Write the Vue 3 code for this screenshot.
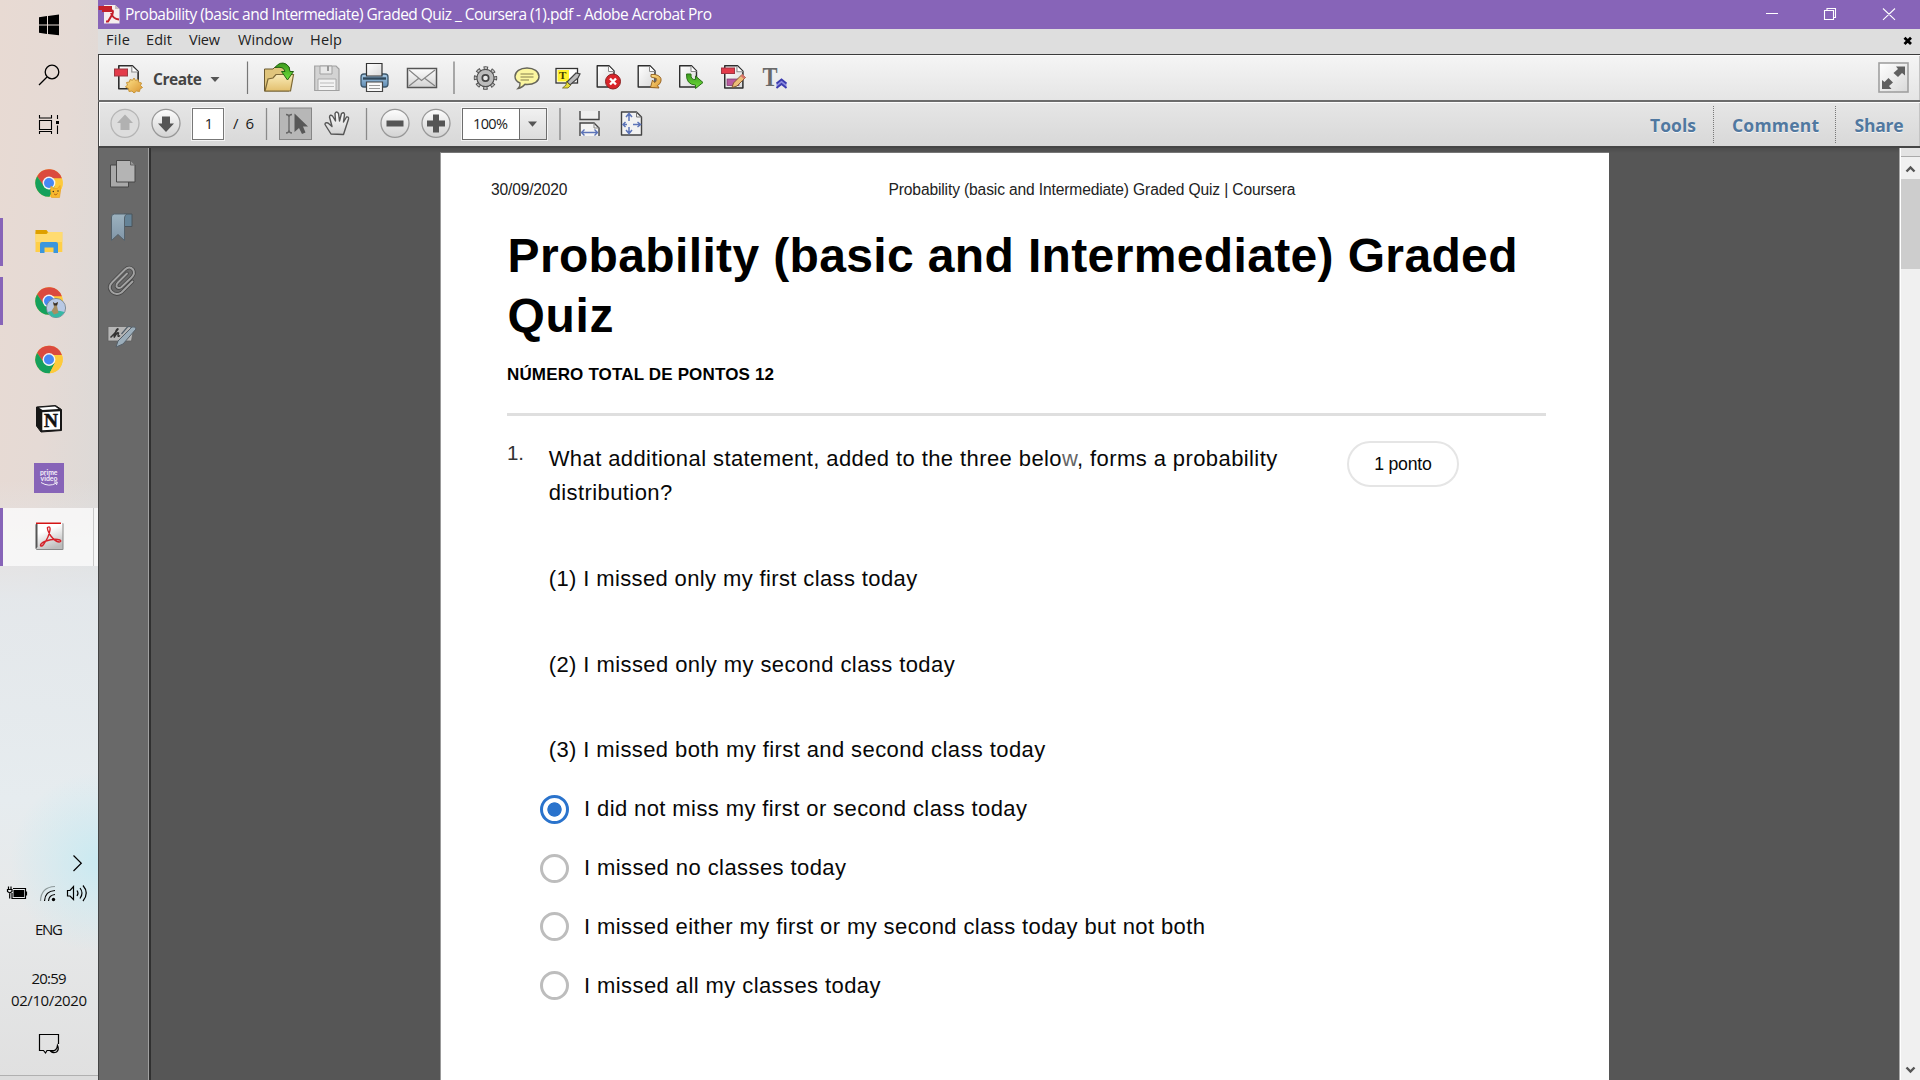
<script setup>
// Text runs carry their own advance width; tracking is adjusted so each run fills it.
const vFit = {
  mounted(el, { value }) {
    const gaps = el.textContent.length - 1
    const natural = el.getBoundingClientRect().width
    el.style.letterSpacing = `${(value - natural) / gaps}px`
    el.style.marginRight = `${-(value - natural) / gaps}px`
  },
}

const menus = [
  { label: 'File', width: 24, cell: 40 },
  { label: 'Edit', width: 26, cell: 43 },
  { label: 'View', width: 31, cell: 49 },
  { label: 'Window', width: 55, cell: 72 },
  { label: 'Help', width: 32, cell: 60 },
]

const options = [
  { text: 'I did not miss my first or second class today', width: 443, checked: true },
  { text: 'I missed no classes today', width: 262, checked: false },
  { text: 'I missed either my first or my second class today but not both', width: 621, checked: false },
  { text: 'I missed all my classes today', width: 296.5, checked: false },
]
</script>

<template>
  <div class="screen">
    <svg class="defs" width="0" height="0">
      <defs>
        <linearGradient id="gPaper" x1="0" y1="0" x2="1" y2="1"><stop offset="0" stop-color="#fff" /><stop offset="1" stop-color="#d9d9d9" /></linearGradient>
        <linearGradient id="gRound" x1="0" y1="0" x2="0" y2="1"><stop offset="0" stop-color="#fdfdfd" /><stop offset="1" stop-color="#d2d2d2" /></linearGradient>
        <linearGradient id="gTile" x1="0.2" y1="0" x2="0.6" y2="1"><stop offset="0.3" stop-color="#fff" /><stop offset="1" stop-color="#bcbcbc" /></linearGradient>
        <linearGradient id="gFolder" x1="0" y1="0" x2="0" y2="1"><stop offset="0" stop-color="#f9ebb8" /><stop offset="1" stop-color="#e3c06e" /></linearGradient>
        <linearGradient id="gGreen" x1="0" y1="0" x2="0" y2="1"><stop offset="0" stop-color="#3c9a1e" /><stop offset="1" stop-color="#6fe03a" /></linearGradient>
        <linearGradient id="gBlue" x1="0" y1="0" x2="0" y2="1"><stop offset="0" stop-color="#a9cbe6" /><stop offset="1" stop-color="#5f8cb4" /></linearGradient>
        <linearGradient id="gGold" x1="0" y1="0" x2="1" y2="1"><stop offset="0" stop-color="#ffe58c" /><stop offset="1" stop-color="#d9932f" /></linearGradient>
        <linearGradient id="gMark" x1="0" y1="0" x2="0" y2="1"><stop offset="0" stop-color="#9cb2bf" /><stop offset="1" stop-color="#8196a8" /></linearGradient>
        <g id="chrome">
          <circle r="13.7" fill="#fc3" />
          <path d="M-11.9-6.8A13.7 13.7 0 0 1 12.9-4.6H0L-5.5 3.2Z" fill="#db4a3f" />
          <path d="M-11.9-6.8A13.7 13.7 0 0 0 .6 13.7L6 3.2 0 6.4-5.2 3Z" fill="#15a05c" />
          <path d="M0-4.6H12.9A13.7 13.7 0 0 1 .6 13.7L6 3.2Z" fill="#fdca3c" />
          <circle r="6.4" fill="#f4f4f4" /><circle r="5" fill="#4688f4" />
        </g>
        <g id="sheet">
          <path d="M.7.7H12.5L17.5 6V22H.7Z" fill="url(#gPaper)" stroke="#2e2e2e" stroke-width="1.4" stroke-linejoin="round" />
          <path d="M12 1V6.5H17.5" fill="#fff" stroke="#8a8a8a" stroke-width="1" />
        </g>
      </defs>
    </svg>

    <aside class="taskbar">
      <svg width="98" height="50" viewBox="0 0 98 50"><path d="M39 17.2 47 16v8.5H39ZM48 15.9 59 14.6V24.5H48ZM39 25.5H47V34L39 32.8ZM48 25.5H59V35.2L48 34Z" fill="#000" /></svg>
      <svg width="98" height="50" viewBox="0 50 98 50" fill="none" stroke="#000" stroke-width="1.3"><circle cx="52" cy="72" r="6.8" /><path d="M47 77 39 85" /></svg>
      <svg width="98" height="50" viewBox="0 100 98 50" fill="none" stroke="#000" stroke-width="1.1"><path d="M39.5 120.5H51.5V129.5H39.5ZM39.5 115V118H51.5V115M39.5 134V131.500H51.5V134M57.500 115V119M57.500 125.500V134" /><rect x="56" y="121" width="3" height="3" fill="#000" stroke="none" /></svg>
      <svg width="98" height="65" viewBox="0 150 98 65">
        <use href="#chrome" transform="translate(49 183)" />
        <path d="M50.500 190 51 186 54 188.500H57.500L60 185.500 60.500 191 59.500 197.500H51.500Z" fill="#f7b92f" stroke="#e89c1d" stroke-width=".6" /><circle cx="53.300" cy="191.500" r=".7" fill="#222" /><circle cx="58" cy="191" r=".7" fill="#222" /><path d="M54 194Q56 196 57.500 193.500" fill="none" stroke="#a44d12" stroke-width=".8" />
      </svg>
      <div class="task">
        <svg width="98" height="55" viewBox="0 215 98 55">
          <rect x="0" y="218" width="3" height="48" fill="#8764b8" />
          <path d="M35.500 232H62.300V252H35.500Z" fill="#ffcf48" /><path d="M35.500 230H46.500L48 232 46.500 234H35.500Z" fill="#dea000" /><path d="M35.500 234H47L49 232H62.300V242H35.500Z" fill="#ffdb70" />
          <path d="M40 253V244Q40 242 42 242H56Q58 242 58 244V253H53.500V247.500H44.500V253Z" fill="#3a96dd" />
        </svg>
      </div>
      <svg width="98" height="65" viewBox="0 270 98 65">
        <rect x="0" y="277" width="3" height="48" fill="#8764b8" />
        <use href="#chrome" transform="translate(49 301)" />
        <circle cx="56" cy="308" r="9.600" fill="#b9c9e4" stroke="#6e7e88" stroke-width=".8" /><path d="M47.500 312Q56 309 64.500 312Q61 317.500 56 317.500T47.500 312Z" fill="#37b8a4" /><path d="M53 302 55 304 58 302 57 306 58.500 313 54 314.500 51.500 311 54 307Z" fill="#a78f62" /><path d="M53 302 55 303.500 58 302 57 305.500H54Z" fill="#37302a" />
      </svg>
      <svg width="98" height="50" viewBox="0 335 98 50"><use href="#chrome" transform="translate(49 359.500)" /></svg>
      <svg width="98" height="65" viewBox="0 385 98 65">
        <path d="M36.500 407 55.500 405.500 61.500 409.500V430.500L41 432 36.500 426Z" fill="#161616" stroke="#161616" stroke-linejoin="round" />
        <path d="M39 407.800 55 406.600 58.500 409 42.500 410Z" fill="#fff" /><path d="M42.300 412.300 60 411.200V429.300L42.300 430.200Z" fill="#fff" />
        <text x="44" y="427" font-family="Liberation Serif, serif" font-weight="700" font-size="18.500" textLength="14" lengthAdjust="spacingAndGlyphs" fill="#111" stroke="#111" stroke-width=".5">N</text>
      </svg>
      <svg width="98" height="58" viewBox="0 450 98 58">
        <rect x="34" y="463" width="30" height="30" fill="#8764b8" />
        <g font-family="Lato, sans-serif" font-weight="700" font-size="7" fill="#f4effa"><text x="40" y="474.500" textLength="17.500" lengthAdjust="spacingAndGlyphs">prime</text><text x="40.500" y="480.800" textLength="17" lengthAdjust="spacingAndGlyphs">video</text></g>
        <path d="M41 482.500Q49 487.500 56.500 483M54 482H57.300L56.500 485" fill="none" stroke="#f4effa" stroke-width="1" />
      </svg>
      <div class="task current">
        <svg width="98" height="58" viewBox="0 508 98 58">
          <rect x="0" y="508" width="3" height="58" fill="#8764b8" /><rect x="93" y="508" width="1" height="58" fill="#c9c9c9" />
          <rect x="36" y="523" width="27.500" height="27" rx="1" fill="#888" /><rect x="36.500" y="523" width="26" height="26" fill="url(#gTile)" /><path d="M35.500 524.500 37.500 523V547L35.500 549Z" fill="#555" /><path d="M36 522.500H61V524H36Z" fill="#d41414" />
          <path d="M47.500 527.500Q50.500 525.500 50 530 49 537 43.500 544.500 41.500 547 40.500 545.500 40 543.500 46 541 54 538 60 540 62 541.500 59 542 55 541.500 50.500 535.500 47 530 47.500 527.500Z" fill="none" stroke="#d5222a" stroke-width="1.400" />
        </svg>
      </div>
      <div class="grow"></div>
      <svg width="98" height="80" viewBox="0 840 98 80" fill="none" stroke="#000" stroke-width="1.200">
        <path d="M73.500 855.500 81.300 863.200 73.500 871" />
        <path d="M13 888.500H25.500V898.500H12V893M26.500 891.500V895.500" /><rect x="13.500" y="890" width="10.700" height="7" fill="#000" stroke="none" /><path d="M8.500 886.500V889M11 886.500V889M7.500 889.500H12V891.500L9.800 893 7.500 891.500ZM9.700 893V898.500" />
        <path d="M40.500 901Q41 887 55 886.500" stroke="#8c9899" /><path d="M44.500 901Q45 891 55 890.500M48.500 901Q49 895 55 894.500" /><circle cx="53.500" cy="899.500" r="1.700" fill="#000" stroke="none" />
        <path d="M67.500 890.500H70L73.500 886.500V899.500L70 896H67.500ZM77 890.500Q79 893 77 896M80 888Q84 893 80 898.500M83 885.500Q89.500 893 83 901" />
      </svg>
      <div class="tray lang"><span v-fit="28">ENG</span></div>
      <div class="tray time"><span v-fit="35">20:59</span></div>
      <div class="tray date"><span v-fit="76">02/10/2020</span></div>
      <svg width="98" height="59" viewBox="0 1016 98 59" fill="none" stroke="#000" stroke-width="1.200"><path d="M54 1050.500H47L45.500 1053 43.500 1050.500H39.500V1034.500H58.500V1044" /><path d="M57.500 1045.500Q59.500 1049.500 56.500 1052 53 1053.500 51 1051.500 57 1051 57.500 1045.500Z" stroke-width="1.300" /></svg>
      <div class="edge"></div>
    </aside>

    <main class="window">
      <header class="titlebar">
        <svg width="27" height="29" viewBox="98 0 27 29"><path d="M104 5H115L119.500 9V23.500H104Z" fill="#f5eeee" /><path d="M115 5V9H119.500Z" fill="#c9bcbc" /><path d="M98.500 6H112V12H102V10H98.500Z" fill="#c4202b" /><path d="M110.500 11Q114 9 112.500 14L108 21.500H106M111 13Q113 19 119 19.500" fill="none" stroke="#c4202b" stroke-width="2" /></svg>
        <span v-fit="587" class="title">Probability (basic and Intermediate) Graded Quiz _ Coursera (1).pdf - Adobe Acrobat Pro</span>
        <svg class="controls" width="180" height="29" viewBox="1740 0 180 29" fill="none" stroke="#fff" stroke-width="1.100"><path d="M1766 13.500H1778M1824.500 10.500H1833.500V19.500H1824.500ZM1827 10.500V8.500H1835.500V17.500H1833.500M1883 8.500 1895 19.800M1895 8.500 1883 19.800" /></svg>
      </header>

      <nav class="menubar">
        <div v-for="m in menus" :key="m.label" class="menu" :style="{ width: m.cell + 'px' }"><span v-fit="m.width">{{ m.label }}</span></div>
        <svg class="closedoc" width="20" height="25" viewBox="1900 29 20 25"><path d="M1904.500 37.800 1911 44M1911 37.800 1904.500 44" stroke="#000" stroke-width="2.800" /></svg>
      </nav>

      <section class="bar primary">
        <svg width="55" height="45" viewBox="98 55 55 45"><use href="#sheet" transform="translate(118 65) scale(1.150 1.080)" /><rect x="114.500" y="69" width="13" height="7" fill="#e33b4a" stroke="#9c3a42" /><path d="M134 78 135.500 80.500 138 79.500 138.500 82 141.500 83 140.500 85.500 142.500 87.500 140 89 139.500 91.500 136.500 91 134 93 132 91 129 91.500 128.500 88.500 125.500 87 127.500 85 126.500 82.500 129.500 82 130 79.500 132.500 80.300Z" fill="url(#gGold)" stroke="#c8963c" /></svg>
        <div class="create"><span v-fit="49">Create</span></div>
        <svg width="35" height="45" viewBox="205 55 35 45"><path d="M210.500 77H219.500L215 82Z" fill="#555" /></svg>
        <svg width="16" height="45" viewBox="240 55 16 45"><path d="M247.500 61.500V94" stroke="#777" stroke-width="1.200" /></svg>
        <svg width="46" height="45" viewBox="256 55 46 45"><path d="M264.500 91V69H273L275 67H289V91Z" fill="#e0c57c" stroke="#6b5a31" /><path d="M265 91 268 79 273 78 276 74.500H293.500L290.500 91Z" fill="url(#gFolder)" stroke="#7d6936" stroke-width="1.200" /><path d="M275 67.500Q280 61 286 64 290 66 290 71.500H293.500L287.500 80 281.500 71.500H285Q284 66 275 67.500Z" fill="url(#gGreen)" stroke="#236213" /></svg>
        <svg width="48" height="45" viewBox="302 55 48 45"><path d="M314.700 66H336L339 69V90.500H314.700Z" fill="#d3d3d3" stroke="#a1a1a1" stroke-width="1.200" /><path d="M320 66H332V74H320Z" fill="#e8e8e8" stroke="#a1a1a1" /><path d="M328 66V71" stroke="#999" stroke-width="2" /><path d="M318 90V79H336V90" fill="#f2f2f2" stroke="#a8a8a8" /><path d="M320 83H334M320 86.500H334" stroke="#bbb" /></svg>
        <svg width="47" height="45" viewBox="350 55 47 45"><rect x="361" y="74" width="27" height="13" rx="3" fill="url(#gBlue)" stroke="#3e586c" stroke-width="1.300" /><path d="M366.500 76V63.500H382V76Z" fill="url(#gPaper)" stroke="#333" stroke-width="1.200" /><path d="M363 78.500H386" stroke="#30485b" stroke-width="2.400" /><path d="M366.500 82H382.500V91.500H366.500Z" fill="#f8f8f8" stroke="#444" stroke-width="1.200" /><path d="M369 85.500H380M369 88.500H380" stroke="#999" /></svg>
        <svg width="48" height="45" viewBox="397 55 48 45"><rect x="407.500" y="68.500" width="29" height="19" fill="url(#gRound)" stroke="#555" stroke-width="1.500" /><path d="M409 70 421.500 80.500 435 70M409 86 418.500 78.500M435 86 425 78.500" fill="none" stroke="#858585" stroke-width="1.200" /></svg>
        <svg width="20" height="45" viewBox="445 55 20 45"><path d="M454 61.500V94" stroke="#777" stroke-width="1.200" /></svg>
        <svg width="40" height="45" viewBox="465 55 40 45"><circle cx="485.500" cy="78" r="10" fill="none" stroke="#4d4d4d" stroke-width="3.400" stroke-dasharray="4.400 3.454" stroke-dashoffset="2.200" /><circle cx="485.500" cy="78" r="8.600" fill="#bcbcbc" stroke="#505050" stroke-width="1.200" /><circle cx="485.500" cy="78" r="10" fill="none" stroke="#bcbcbc" stroke-width="1.800" stroke-dasharray="2.600 5.254" stroke-dashoffset="1.300" /><circle cx="485.500" cy="78" r="3.200" fill="#e8e8e8" stroke="#444" stroke-width="1.700" /></svg>
        <svg width="43" height="45" viewBox="505 55 43 45"><path d="M527 68C534 68 539 71.500 539 76.500S534 84.500 527 84.500L525 84.300Q522 88 518 88.500 520.500 86 520 83 515 81 515 76.500C515 71.500 520 68 527 68Z" fill="#fbf6a0" stroke="#66655a" stroke-width="1.400" /><path d="M520.500 74H533.500M520.500 77H533.500M520.500 80H529" stroke="#857f4e" stroke-width="1.200" /></svg>
        <svg width="40" height="45" viewBox="548 55 40 45"><rect x="556" y="68.500" width="21.500" height="14.500" fill="#fff" stroke="#333" stroke-width="1.300" /><rect x="557.500" y="70" width="11.500" height="11.500" fill="#fff22d" /><text x="559" y="79" font-family="Liberation Serif, serif" font-weight="700" font-size="11" fill="#433c00">T</text><path d="M567 82 576 73 580 74 578 78 570 85Z" fill="#bbb" stroke="#444" stroke-width="1.200" /><path d="M566.500 81.500 570.500 85.500 568 88H562.500L566 85Z" fill="#e6db34" stroke="#68601e" stroke-width=".8" /></svg>
        <svg width="42" height="45" viewBox="588 55 42 45"><use href="#sheet" transform="translate(596.500 65)" /><circle cx="613" cy="81.500" r="7.500" fill="#d9242a" stroke="#8c2222" /><path d="M610 78.500 616 84.500M616 78.500 610 84.500" stroke="#fff" stroke-width="2.400" /></svg>
        <svg width="40" height="45" viewBox="630 55 40 45"><use href="#sheet" transform="translate(637.500 65)" /><path d="M651 74.500H655Q662 76 661 81 660.500 84 657.500 85.500L659 88 650.500 87.500 652.500 80 654.500 82.500Q658 81 656.500 78.500L651 77Z" fill="url(#gGold)" stroke="#925e1d" stroke-width=".9" /></svg>
        <svg width="42" height="45" viewBox="670 55 42 45"><use href="#sheet" transform="translate(679 65)" /><path d="M686.500 74H691Q690.500 80 695.500 79.500V76L703 82.500 695.500 88.500V85Q686 84.500 686.500 74Z" fill="url(#gGreen)" stroke="#2b7018" /></svg>
        <svg width="43" height="45" viewBox="712 55 43 45"><use href="#sheet" transform="translate(724 65) scale(1.080 1.050)" /><rect x="721.500" y="68" width="13" height="5.500" fill="#e33b4a" stroke="#a13542" /><rect x="727" y="79" width="12" height="6.500" fill="#b95aa0" stroke="#773769" stroke-width=".7" /><path d="M732 87.500 733.500 83 742 74.500 745.500 77.500 737 86Z" fill="#edbd78" stroke="#805128" stroke-width=".9" /><path d="M740.500 76 742.500 74 745.500 77.500 744 79Z" fill="#d8736c" /></svg>
        <svg width="45" height="45" viewBox="755 55 45 45"><text x="762.500" y="86" font-family="Liberation Serif, serif" font-weight="700" font-size="27" textLength="15" lengthAdjust="spacingAndGlyphs" fill="#696969">T</text><path d="M776.500 83.500 781.500 79.500 786.500 83.500V88L781.500 84 776.500 88Z" fill="#8d8de0" /><path d="M776.500 83.500 781.500 79.500 786.500 83.500M776.500 88 781.500 84 786.500 88" fill="none" stroke="#3b3baf" stroke-width="1.800" /></svg>
        <i></i>
        <svg width="50" height="45" viewBox="1870 55 50 45"><rect x="1879" y="63" width="29" height="29" fill="url(#gPaper)" stroke="#a0a0a0" stroke-width="1.600" /><path d="M1896 66.500H1905V75.500L1902 73 1898 77 1893.500 73 1898 69ZM1882 80 1884.500 82 1888.500 78 1893 82.500 1889 86 1891.500 89H1882Z" fill="#606060" /></svg>
      </section>

      <section class="bar secondary">
        <svg width="47" height="44" viewBox="98 102 47 44"><circle cx="125" cy="123.300" r="14" fill="#ddd" stroke="#b5b5b5" stroke-width="1.300" /><path d="M125 114.500 133 123H129.500V130H120.500V123H117Z" fill="#b1b1b1" /></svg>
        <svg width="40" height="44" viewBox="145 102 40 44"><circle cx="166" cy="123.300" r="14" fill="url(#gRound)" stroke="#989898" stroke-width="1.300" /><path d="M166 132 158 123.500H162V116.500H170V123.500H174Z" fill="#555" /></svg>
        <div class="pagebox">1</div>
        <div class="pages"><span v-fit="21">/&nbsp; 6</span></div>
        <svg width="12" height="44" viewBox="260 102 12 44"><path d="M266.500 108V140" stroke="#8a8a8a" stroke-width="1.300" /></svg>
        <svg width="46" height="44" viewBox="272 102 46 44"><rect x="279.500" y="108" width="32" height="31.500" fill="#b7b7b7" stroke="#868686" /><path d="M286 114.500Q289 114.500 289 117V130Q289 133 286 133M292 114.500Q289 114.500 289 117M289 130Q289 133 292 133" fill="none" stroke="#666" stroke-width="1.300" /><path d="M294.500 113.500V132L299 128 302 134 305.500 132.500 303 126.500H308Z" fill="#585858" /></svg>
        <svg width="38" height="44" viewBox="318 102 38 44"><path d="M331 134 325 124.500Q325 122 328 123L332 126.500 329.500 117Q330 114 332.500 116L335.500 121 335 113.500Q336.500 110.500 338.500 113.500L339.500 121 341.500 113.500Q344 111.500 344.500 114.500L343.500 122 346.500 117Q349 116.500 348.500 119L343.500 134.500Z" fill="url(#gRound)" stroke="#555" stroke-width="1.400" stroke-linejoin="round" /></svg>
        <svg width="19" height="44" viewBox="356 102 19 44"><path d="M366.500 108V140" stroke="#8a8a8a" stroke-width="1.300" /></svg>
        <svg width="40" height="44" viewBox="375 102 40 44"><circle cx="395" cy="123.300" r="14" fill="url(#gRound)" stroke="#989898" stroke-width="1.300" /><rect x="386.500" y="120.500" width="17" height="6" fill="#555" /></svg>
        <svg width="40" height="44" viewBox="415 102 40 44"><circle cx="436" cy="123.300" r="14" fill="url(#gRound)" stroke="#989898" stroke-width="1.300" /><path d="M433 114.500H439V120.500H445V126.500H439V132.500H433V126.500H427V120.500H433Z" fill="#555" /></svg>
        <div class="zoombox"><div class="pct"><span v-fit="35">100%</span></div><div class="drop"><svg width="27" height="30" viewBox="520 109 27 30"><path d="M528 121.500H537L532.500 126.700Z" fill="#555" /></svg></div></div>
        <svg width="22" height="44" viewBox="550 102 22 44"><path d="M560 108V140" stroke="#8f8f8f" stroke-width="1.500" /></svg>
        <svg width="38" height="44" viewBox="572 102 38 44"><path d="M580 111V119.500H599V111" fill="#eee" stroke="#444" stroke-width="1.400" /><path d="M580 136V123H594L599 128V136" fill="#f4f4f4" stroke="#444" stroke-width="1.400" /><path d="M594 123V128H599" fill="none" stroke="#888" /><path d="M582 132.500H597M584.500 129.500 581.500 132.500 584.500 135.500M594.500 129.500 597.500 132.500 594.500 135.500" fill="none" stroke="#5c74b8" stroke-width="1.400" /></svg>
        <svg width="40" height="44" viewBox="610 102 40 44"><path d="M621.500 112H636.500L641.500 117V135H621.500Z" fill="#f2f2f2" stroke="#444" stroke-width="1.400" stroke-linejoin="round" /><path d="M636.500 112V117H641.500" fill="none" stroke="#777" /><path d="M629 114V121M629 127V133M622.500 124.500H627M633 124.500H640M626 117 629 113.500 632 117M626 130 629 133.500 632 130M625.500 122 623 124.500 625.500 127M637.500 122 640.500 124.500 637.500 127" fill="none" stroke="#5c74b8" stroke-width="1.500" /></svg>
        <i></i>
        <div class="panel tools"><span v-fit="46">Tools</span></div>
        <div class="panel comment"><span v-fit="87">Comment</span></div>
        <div class="panel share"><span v-fit="49">Share</span></div>
      </section>

      <div class="body">
        <aside class="side">
          <svg width="51" height="220" viewBox="98 148 51 220">
            <path d="M110.500 165H128.500V187H110.500Z" fill="#a9a9a9" stroke="#474747" /><path d="M116.500 160.500H130.500L135 165V182H116.500Z" fill="#b4b4b4" stroke="#474747" /><path d="M130.500 160.500V165H135" fill="#999" stroke="#666" />
            <path d="M124 214H132V226.500H124Z" fill="#658397" stroke="#4b545b" /><path d="M111.500 240.500V217Q111.500 214 114.500 214H127Q124.500 215 124.500 218V240.500L118 234.500Z" fill="url(#gMark)" stroke="#54626c" stroke-width="1" />
            <g fill="none" stroke-linecap="round" stroke-linejoin="round"><path d="M132.500 281.500 121.500 292.500Q116 296 111.500 291.500 107.500 287 112.500 282L125 269.500Q129.500 265.500 133 269.500 135.500 273.500 131.500 277.500L121 287.500Q118 289 116.500 286.500 116 284.500 118 282.500L127 273.500" stroke="#484848" stroke-width="3.600" /><path d="M132.500 281.500 121.500 292.500Q116 296 111.500 291.500 107.500 287 112.500 282L125 269.500Q129.500 265.500 133 269.500 135.500 273.500 131.500 277.500L121 287.500Q118 289 116.500 286.500 116 284.500 118 282.500L127 273.500" stroke="#a2a2a2" stroke-width="1.900" /></g>
            <path d="M108 326.500H134L131.500 341H108Z" fill="#b6b6b6" stroke="#606060" stroke-width=".8" /><path d="M110.500 337.500Q115.500 333 118 329 116.500 327.500 114 337.500 117.500 331.500 118.500 333 117 338 120 335.500" fill="none" stroke="#333" stroke-width="1.500" /><path d="M116 347 118 341 132 327Q136 326 136 329L123 344Z" fill="#9caebb" stroke="#566069" stroke-width="1" /><path d="M121.500 334 127 327.500Q129.500 325.500 131 327.500" fill="none" stroke="#53606a" stroke-width="1.200" />
          </svg>
        </aside>
        <div class="canvas">
          <article class="page">
            <div class="running"><span v-fit="76.5">30/09/2020</span><span v-fit="407" class="runtitle">Probability (basic and Intermediate) Graded Quiz | Coursera</span></div>
            <h1><div><span v-fit="1010">Probability (basic and Intermediate) Graded</span></div><div><span v-fit="106">Quiz</span></div></h1>
            <h2><span v-fit="267">NÚMERO TOTAL DE PONTOS 12</span></h2>
            <hr />
            <div class="question">
              <div class="num"><span v-fit="17">1.</span></div>
              <div class="prompt">
                <p><span v-fit="728.5">What additional statement, added to the three belo<em>w</em>, forms a probability</span></p>
                <p><span v-fit="123.5">distribution?</span></p>
                <p class="given"><span v-fit="368.5">(1) I missed only my first class today</span></p>
                <p class="given second"><span v-fit="406">(2) I missed only my second class today</span></p>
                <p class="given third"><span v-fit="496.5">(3) I missed both my first and second class today</span></p>
              </div>
              <div class="points"><span v-fit="57.5">1 ponto</span></div>
            </div>
            <ul class="options">
              <li v-for="o in options" :key="o.text">
                <span class="radio" :class="{ checked: o.checked }"></span><span v-fit="o.width">{{ o.text }}</span>
              </li>
            </ul>
          </article>
        </div>
        <div class="scroll">
          <div class="split"></div>
          <svg width="19" height="22" viewBox="1901 157 19 22"><path d="M1906.500 171.500 1910.500 167.500 1914.500 171.500" fill="none" stroke="#555" stroke-width="2.400" /></svg>
          <div class="thumb"></div>
          <div class="grow"></div>
          <svg width="19" height="22" viewBox="1901 1058 19 22"><path d="M1906.500 1067.500 1910.500 1071.500 1914.500 1067.500" fill="none" stroke="#555" stroke-width="2.400" /></svg>
        </div>
      </div>
    </main>
  </div>
</template>

<style>
body { margin: 0; overflow: hidden; }
</style>

<style scoped>
.screen { display: flex; width: 1920px; height: 1080px; overflow: hidden; font-family: "Open Sans", "Noto Sans", sans-serif; color: #1a1a1a; }
.defs { position: absolute; }
svg { display: block; flex: none; }
span { white-space: nowrap; display: inline-block; }
.grow { flex: 1; }

.taskbar { width: 98px; height: 1080px; flex: none; display: flex; flex-direction: column;
  background: radial-gradient(circle at 100px 862px, rgba(200, 234, 242, .95), rgba(220, 236, 240, 0) 90px),
    linear-gradient(180deg, transparent 0 480px, rgba(228, 233, 237, .9) 600px, #e6ecef 800px, #e7e9ea 900px, #e0e0e0 1080px),
    linear-gradient(95deg, #e8dad3 0, #e5dad5 40%, #d9d9d8 90%); }
.current { background: rgba(250, 250, 250, .82); }
.tray { display: flex; justify-content: center; font-size: 15px; color: #111; }
.lang { height: 18px; line-height: 18px; margin-bottom: 29px; }
.time { height: 22px; line-height: 22px; }
.date { height: 22px; line-height: 22px; margin-bottom: 5px; }
.edge { height: 5px; box-sizing: border-box; border-top: 1px solid #b0b0b0; background: #dcdcdc; }

.window { flex: 1; min-width: 0; display: flex; flex-direction: column; }
.titlebar { height: 29px; background: #8764b8; display: flex; }
.title { font-size: 15.500px; line-height: 29px; color: #fff; }
.controls { margin-left: auto; }
.menubar { height: 25px; background: #dedede; display: flex; padding-left: 8px; font-size: 14.500px; line-height: 22.500px; color: #222; border-bottom: 1px solid #3c3c3c; }
.closedoc { margin-left: auto; }
.bar { display: grid; box-sizing: border-box; box-shadow: inset 1px 0 #444, inset 2px 0 #fafafa, inset 0 1px #fcfcfc, inset -1px 0 #c4c4c4; }
.primary { height: 47px; grid-template-columns: 55px 52px 35px 16px 46px 48px 47px 48px 20px 40px 43px 40px 42px 40px 42px 43px 45px 1fr 50px; background: linear-gradient(#f5f5f5, #e5e5e5); border-bottom: 2px solid #6c6c6c; }
.secondary { height: 46px; grid-template-columns: 47px 40px 45px 30px 12px 46px 38px 19px 40px 40px 95px 22px 38px 40px 1fr 74px 122px 84px; background: linear-gradient(#e6e6e6, #d8d8d8); border-bottom: 2px solid #454545; }
.create { font-weight: 700; font-size: 15.500px; line-height: 48px; color: #444; }
.pagebox { width: 32px; height: 32px; box-sizing: border-box; margin: 6px 0 0 7px; padding-left: 2px; border: 1px solid #777; background: #fff; text-align: center; font-size: 14.500px; line-height: 30px; outline: 1px solid #f4f4f4; }
.pages { font-size: 15px; line-height: 43px; padding-left: 3px; }
.zoombox { display: flex; width: 85px; height: 32px; margin: 6px 0 0 7px; box-sizing: border-box; border: 1px solid #6d6d6d; background: #fff; outline: 1px solid #f4f4f4; font-size: 14.500px; line-height: 30px; }
.pct { width: 56px; padding-left: 10px; box-sizing: border-box; }
.drop { width: 26px; border-left: 1px solid #6d6d6d; background: linear-gradient(#f1f1f1, #dcdcdc); overflow: hidden; }
.panel { font-weight: 700; font-size: 17.500px; line-height: 46px; color: #5078a0; text-shadow: 0 1px #f5f5f5; }
.tools { padding-left: 10px; background: linear-gradient(#777 50%, transparent 50%) right 4px / 1px 2px repeat-y; }
.comment { padding-left: 18px; background: linear-gradient(#777 50%, transparent 50%) right 4px / 1px 2px repeat-y; }
.tools, .comment { clip-path: inset(4px 0 5px 0); }
.share { padding-left: 18.500px; }

.body { flex: 1; min-height: 0; display: flex; }
.side { width: 53px; box-sizing: border-box; background: #696969; border-left: 1px solid #444; border-right: 2px solid #303030; box-shadow: inset -1px 0 #a0a0a0; }
.side svg { margin-left: -1px; }
.canvas { flex: 1; background: linear-gradient(#4c4c4c, #565656 5px); border-right: 1px solid #a9a9a9; overflow: hidden; }
.page { width: 1169px; height: 932px; box-sizing: border-box; margin: 4px 0 0 289px; padding: 27px 0 0 66px; border-left: 1px solid #999; border-top: 1px solid #777; background: #fff; font-family: "Liberation Sans", Arial, sans-serif; color: #080808; overflow: hidden; }
.running { display: flex; margin-left: -16px; height: 20px; line-height: 20px; font-size: 15.600px; color: #222; }
.runtitle { margin-left: 321px; }
h1 { margin: 26px 0 0; font-size: 48px; line-height: 60px; font-weight: 700; color: #000; }
h1 div { padding-left: .5px; }
h2 { margin: 19px 0 0; font-size: 17px; line-height: 20px; font-weight: 700; color: #000; }
hr { margin: 28px 0 0; width: 1039px; height: 3px; border: 0; background: #dfdfdf; }
.question { display: flex; height: 364px; }
.num { width: 41px; font-size: 20.500px; line-height: 34px; padding-top: 20px; color: #333; }
.prompt { width: 799px; padding-top: 26px; font-size: 22px; line-height: 34px; }
.prompt span { margin-left: .700px; }
p { margin: 0; height: 34px; }
.given { margin-top: 52px; }
.second, .third { margin-top: 52px; }
.third { margin-top: 51px; }
em { font-style: normal; color: #666; }
.points { box-sizing: border-box; width: 112px; height: 46px; margin-top: 25px; border: 2px solid #e5e5e5; border-radius: 23px; text-align: center; font-size: 17.700px; line-height: 42px; }
.options { list-style: none; margin: 0; padding: 0 0 0 33px; font-size: 22px; }
li { display: flex; align-items: center; height: 58.800px; }
.radio { box-sizing: border-box; width: 29px; height: 29px; border: 3px solid #bdbdbd; border-radius: 50%; margin-right: 15px; }
.checked { border-color: #2a73cc; background: radial-gradient(circle, #2a73cc 6.800px, #fff 7.500px); }

.scroll { width: 19px; border-left: 1px solid #fff; background: #f0f0f0; display: flex; flex-direction: column; }
.split { height: 8px; background: #e3e3e3; border-bottom: 1px solid #aaa; }
.thumb { height: 90px; background: #cdcdcd; }
</style>
